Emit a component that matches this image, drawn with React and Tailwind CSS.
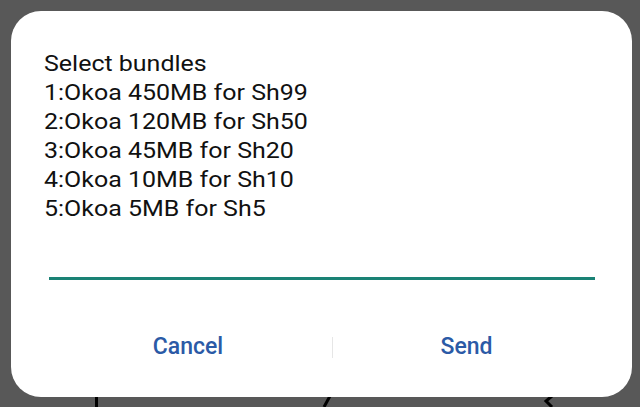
import React from "react";

const bundles = [
  "1:Okoa 450MB for Sh99",
  "2:Okoa 120MB for Sh50",
  "3:Okoa 45MB for Sh20",
  "4:Okoa 10MB for Sh10",
  "5:Okoa 5MB for Sh5",
];

const App = () => {
  return (
    <div
      className="relative w-[640px] h-[407px] bg-[#585858] pt-[11px] pl-[11px] overflow-hidden"
      style={{ fontFamily: "Roboto, 'Noto Sans', sans-serif" }}
    >
      {/* bits of the screen behind the dialog */}
      <svg className="absolute left-0 top-0" width="640" height="407">
        <line x1="96.5" y1="396" x2="96.5" y2="407" stroke="#000" strokeWidth="3" />
        <line x1="330" y1="396" x2="324" y2="407" stroke="#000" strokeWidth="3" />
        <path d="M552 396 L546 401 L552 407" stroke="#000" strokeWidth="3" fill="none" />
      </svg>

      <div className="relative w-[621px] h-[386px] bg-white rounded-[30px] flex flex-col">
        <div className="pl-[33px] pt-[38px]">
          <div className="text-[22px] leading-[29px] text-[#111] origin-left scale-x-[1.135]">
            <p>Select bundles</p>
            {bundles.map((b) => (
              <p key={b}>{b}</p>
            ))}
          </div>
        </div>

        <div className="ml-[38px] mt-[54px] w-[546px] h-[3px] bg-[#1a8275]" />

        <div className="ml-[33px] mt-[52px] flex items-center">
          <button className="w-[288px] text-center text-[23px] leading-[30px] font-medium text-[#2b5aa6]">
            Cancel
          </button>
          <div className="w-px h-[21px] bg-[#e6e6e6]" />
          <button className="w-[267px] text-center text-[23px] leading-[30px] font-medium text-[#2b5aa6]">
            Send
          </button>
        </div>
      </div>
    </div>
  );
};

export default App;
